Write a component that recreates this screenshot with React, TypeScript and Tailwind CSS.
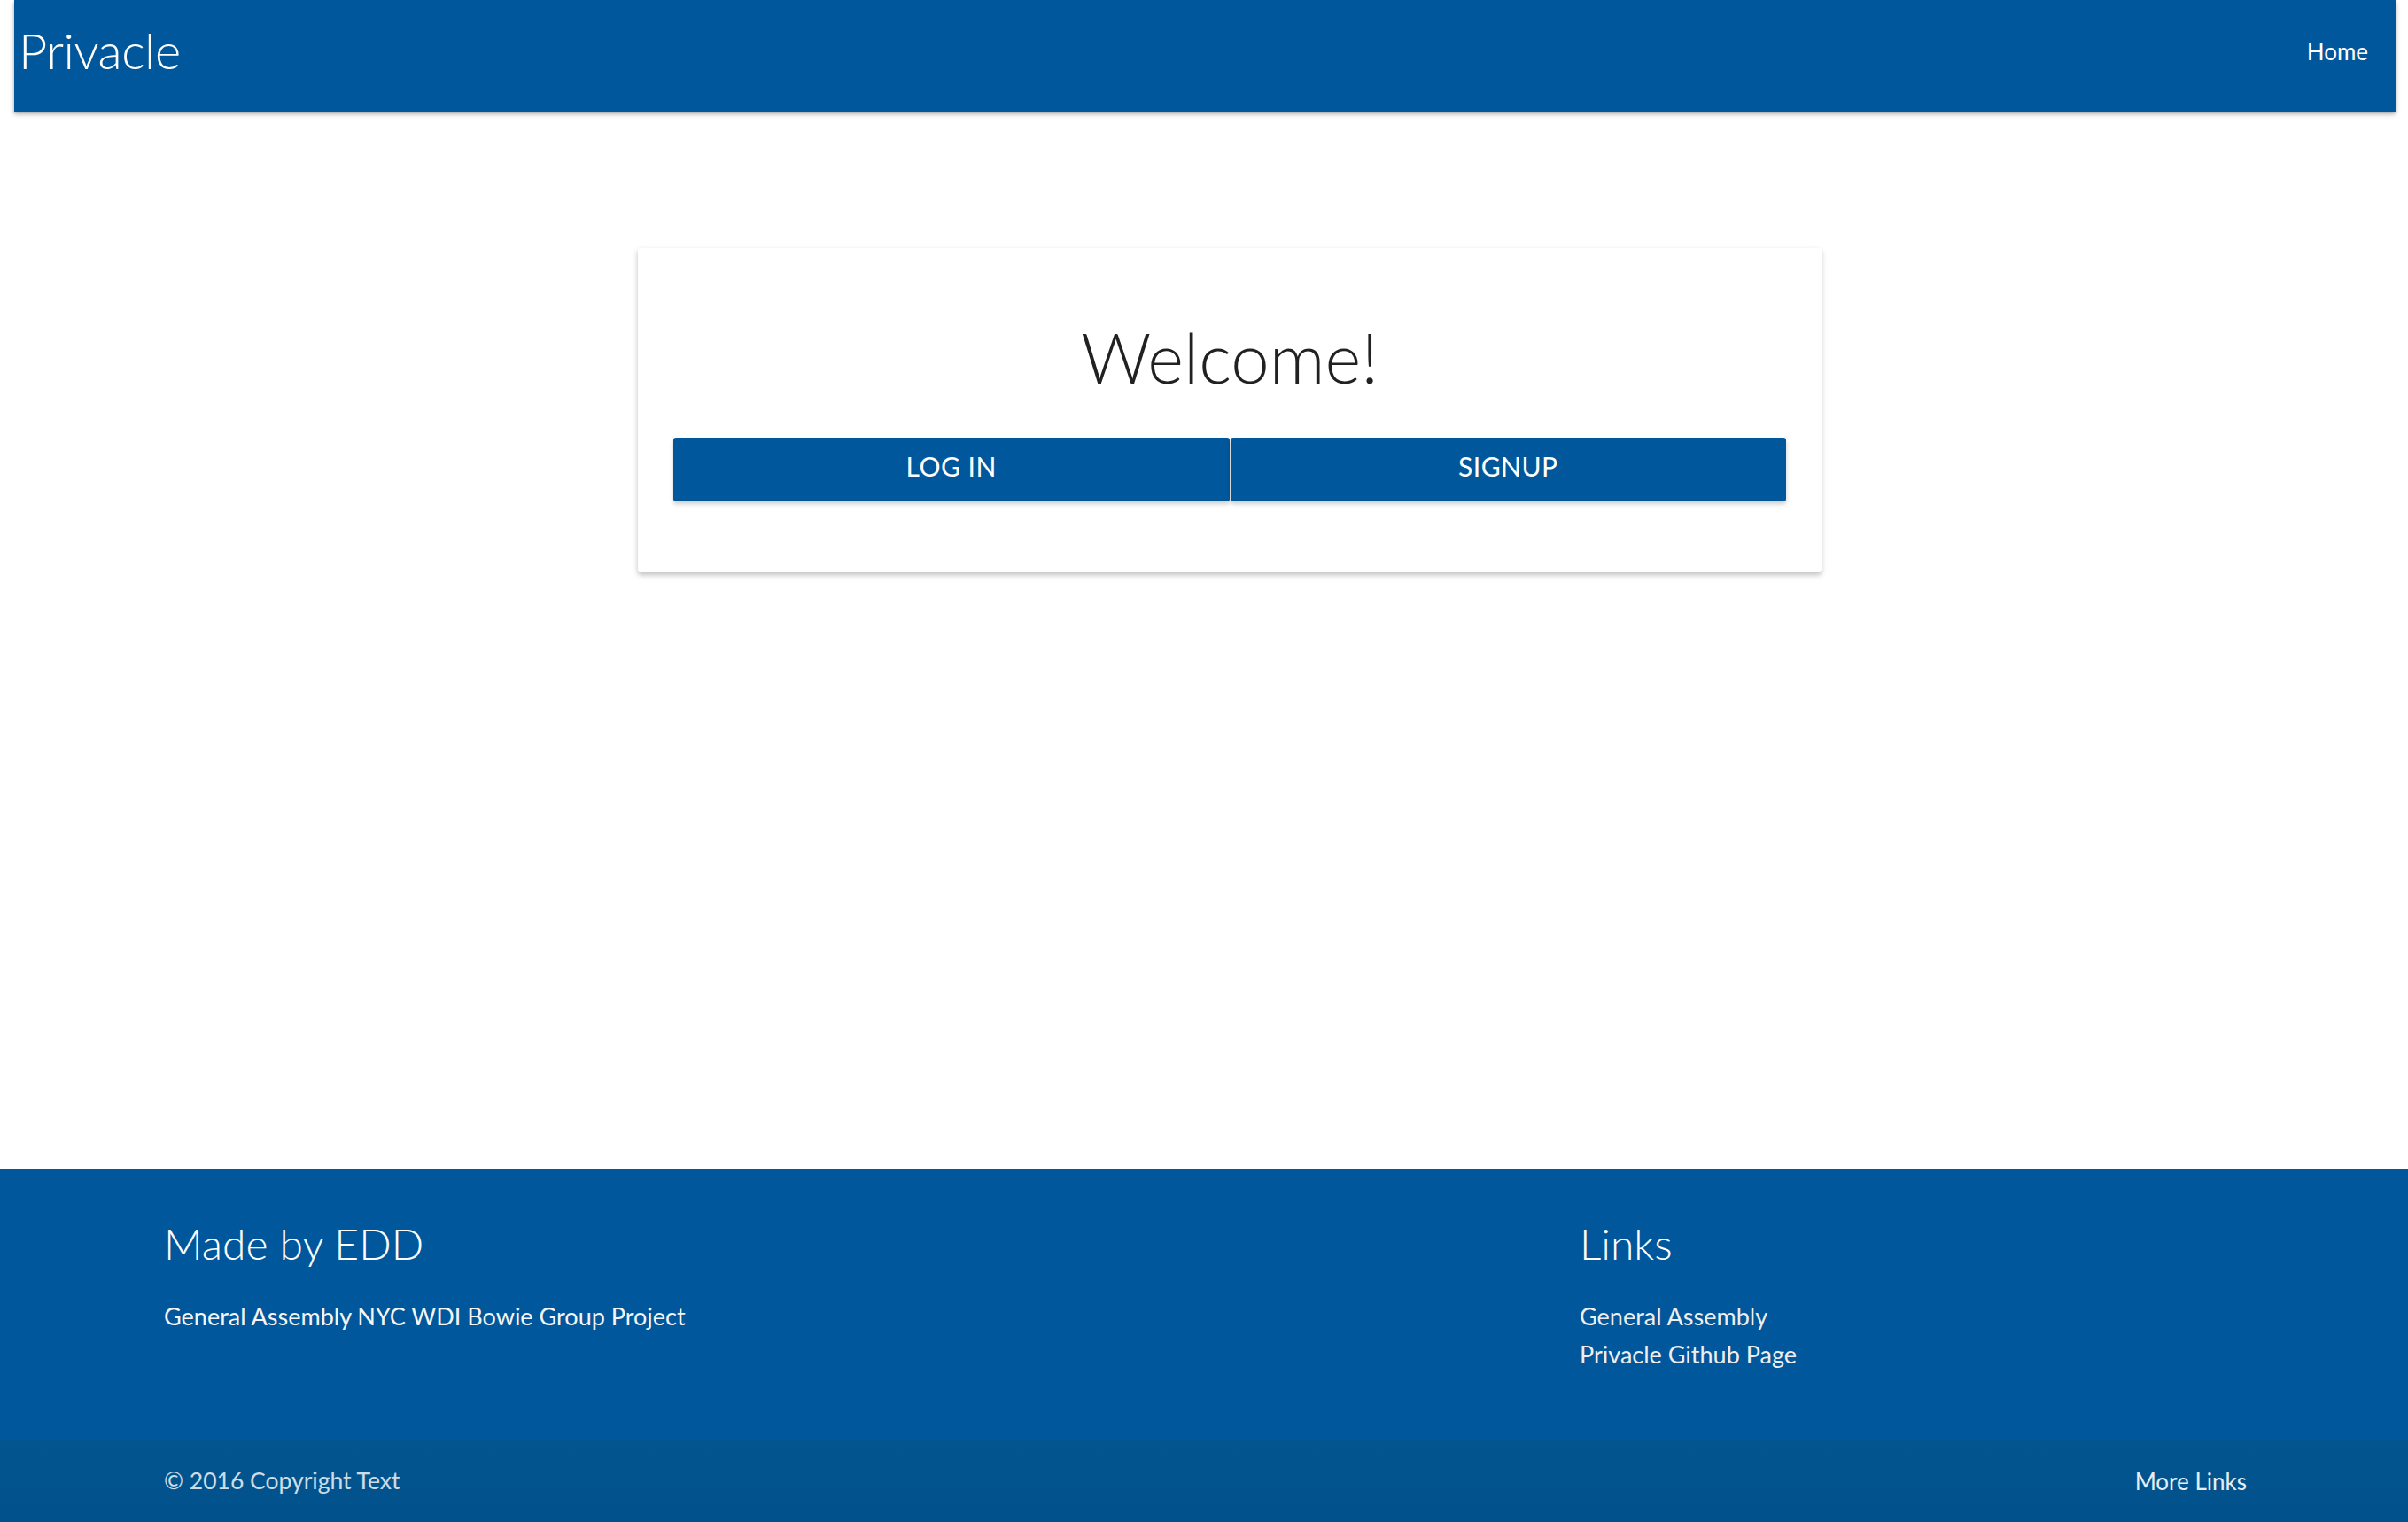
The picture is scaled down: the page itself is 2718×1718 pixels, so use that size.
import React from "react";

const font = { fontFamily: "Lato, 'Open Sans', sans-serif" };

export default function App() {
  return (
    <div className="min-h-screen flex flex-col bg-white" style={font}>
      <nav className="ml-[16px] mr-[14px] h-[126px] bg-[#01579b] flex items-start justify-between shadow-[0_3px_6px_rgba(0,0,0,0.22),0_2px_4px_rgba(0,0,0,0.16)]">
        <a className="mt-[29px] ml-[5px] text-white text-[56px] leading-none font-light tracking-[-0.5px]">Privacle</a>
        <a className="mt-[45px] mr-[31px] text-white text-[26px] leading-none">Home</a>
      </nav>

      <main className="flex-1">
        <div className="ml-[720px] mt-[154px] w-[1336px] bg-white rounded-[3px] shadow-[0_3px_5px_rgba(0,0,0,0.16),0_3px_8px_rgba(0,0,0,0.1)] px-[40px] pt-[84px] pb-[80px]">
          <h3 className="text-center text-[78px] leading-none font-light text-[#212121]">Welcome!</h3>
          <div className="mt-[52px] flex gap-[1px]">
            <button className="flex-1 h-[72px] bg-[#01579b] rounded-[3px] text-white text-[30px] leading-none tracking-[0.5px] flex items-center justify-center pb-[9px] shadow-[0_3px_5px_rgba(0,0,0,0.2)]">
              LOG IN
            </button>
            <button className="flex-1 h-[72px] bg-[#01579b] rounded-[3px] text-white text-[30px] leading-none tracking-[0.5px] flex items-center justify-center pb-[9px] shadow-[0_3px_5px_rgba(0,0,0,0.2)]">
              SIGNUP
            </button>
          </div>
        </div>
      </main>

      <footer className="bg-[#01579b] text-white">
        <div className="h-[305px] pl-[185px] pr-[182px] pt-[60px] flex">
          <div className="flex-1">
            <h5 className="text-[48px] leading-none font-light">Made by EDD</h5>
            <p className="mt-[44px] text-[27px] leading-none text-[#f5f5f5]">General Assembly NYC WDI Bowie Group Project</p>
          </div>
          <div className="w-[753px]">
            <h5 className="text-[48px] leading-none font-light">Links</h5>
            <ul className="mt-[44px] flex flex-col gap-[16px] text-[27px] leading-none text-[#eeeeee]">
              <li>General Assembly</li>
              <li>Privacle Github Page</li>
            </ul>
          </div>
        </div>
        <div className="h-[93px] bg-[linear-gradient(to_bottom,#02558f,#01518c)] pl-[185px] pr-[182px] flex items-center justify-between text-[26.5px] leading-none text-white/80">
          <span>© 2016 Copyright Text</span>
          <a className="text-[26px] text-white/90">More Links</a>
        </div>
      </footer>
    </div>
  );
}
